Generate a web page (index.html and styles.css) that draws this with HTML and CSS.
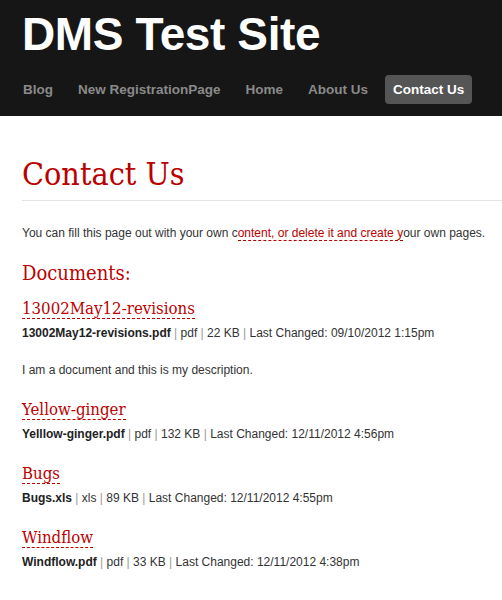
FILE: index.html
```html
<!DOCTYPE html>
<html lang="en">
<head>
  <meta charset="UTF-8" />
  <meta name="viewport" content="width=device-width, initial-scale=1.0" />
  <title>Contact Us | DMS Test Site</title>
  <link rel="stylesheet" href="styles.css">
</head>
<body>

  <header class="site-header">
    <div class="site-title">DMS Test Site</div>
    <nav class="site-nav">
      <a href="#">Blog</a>
      <a href="#">New RegistrationPage</a>
      <a href="#">Home</a>
      <a href="#">About Us</a>
      <a href="#" class="active">Contact Us</a>
    </nav>
  </header>

  <main class="content">
    <h1 class="page-title">Contact Us</h1>

    <p class="intro">You can fill this page out with your own c<a href="#">ontent, or delete it and create y</a>our own pages.</p>

    <h2 class="docs-title">Documents:</h2>

    <div class="doc-list">
      <div class="doc">
        <h3><a href="#">13002May12-revisions</a></h3>
        <p class="meta"><b>13002May12-revisions.pdf</b> <span class="sep">|</span> pdf <span class="sep">|</span> 22 KB <span class="sep">|</span> Last Changed: 09/10/2012 1:15pm</p>
        <p class="desc">I am a document and this is my description.</p>
      </div>

      <div class="doc">
        <h3><a href="#">Yellow-ginger</a></h3>
        <p class="meta"><b>Yelllow-ginger.pdf</b> <span class="sep">|</span> pdf <span class="sep">|</span> 132 KB <span class="sep">|</span> Last Changed: 12/11/2012 4:56pm</p>
      </div>

      <div class="doc">
        <h3><a href="#">Bugs</a></h3>
        <p class="meta"><b>Bugs.xls</b> <span class="sep">|</span> xls <span class="sep">|</span> 89 KB <span class="sep">|</span> Last Changed: 12/11/2012 4:55pm</p>
      </div>

      <div class="doc">
        <h3><a href="#">Windflow</a></h3>
        <p class="meta"><b>Windflow.pdf</b> <span class="sep">|</span> pdf <span class="sep">|</span> 33 KB <span class="sep">|</span> Last Changed: 12/11/2012 4:38pm</p>
      </div>
    </div>
  </main>

</body>
</html>
```

FILE: styles.css
```css
:root {
  --dark: #161616;
  --red: #bb0000;
  --text: #333;
  --muted: #8a8a8a;
}

* {
  margin: 0;
  padding: 0;
  box-sizing: border-box;
}

body {
  background-color: #fff;
  color: var(--text);
  font-family: 'Liberation Sans', Arial, sans-serif;
  font-size: 12px;
  line-height: 18px;
}

a {
  text-decoration: none;
}

/* header */

.site-header {
  background-color: var(--dark);
  height: 116px;
  padding: 11px 22px 0;
}

.site-title {
  color: #fff;
  font-size: 46px;
  font-weight: bold;
  line-height: 46px;
  letter-spacing: -0.4px;
}

.site-nav {
  display: flex;
  gap: 9px;
  margin: 18px 0 0 -7px;
}

.site-nav a {
  color: var(--muted);
  font-size: 13.5px;
  font-weight: bold;
  line-height: 29px;
  padding: 0 8px;
  border-radius: 4px;
}

.site-nav a.active {
  background-color: #555;
  color: #fff;
}

/* content */

.content {
  padding-left: 22px;
}

.page-title,
.docs-title,
.doc h3 {
  font-family: 'DejaVu Serif', 'Liberation Serif', serif;
  font-stretch: condensed;
  font-weight: normal;
  color: var(--red);
}

.page-title {
  font-size: 32px;
  line-height: 40px;
  margin-top: 38px;
  padding-bottom: 6px;
  border-bottom: 1px solid #e2e2e2;
}

.intro {
  margin-top: 23px;
}

.intro a,
.doc h3 a {
  color: var(--red);
  border-bottom: 1px dashed var(--red);
}

.docs-title {
  font-size: 20px;
  line-height: 26px;
  margin-top: 18px;
}

.doc-list {
  display: flex;
  flex-direction: column;
  gap: 19px;
  margin-top: 11px;
}

.doc h3 {
  font-size: 16.7px;
  line-height: 22px;
}

.meta {
  margin-top: 5px;
}

.meta b {
  color: #222;
}

.sep {
  color: #999;
}

.desc {
  margin-top: 19px;
}
```
